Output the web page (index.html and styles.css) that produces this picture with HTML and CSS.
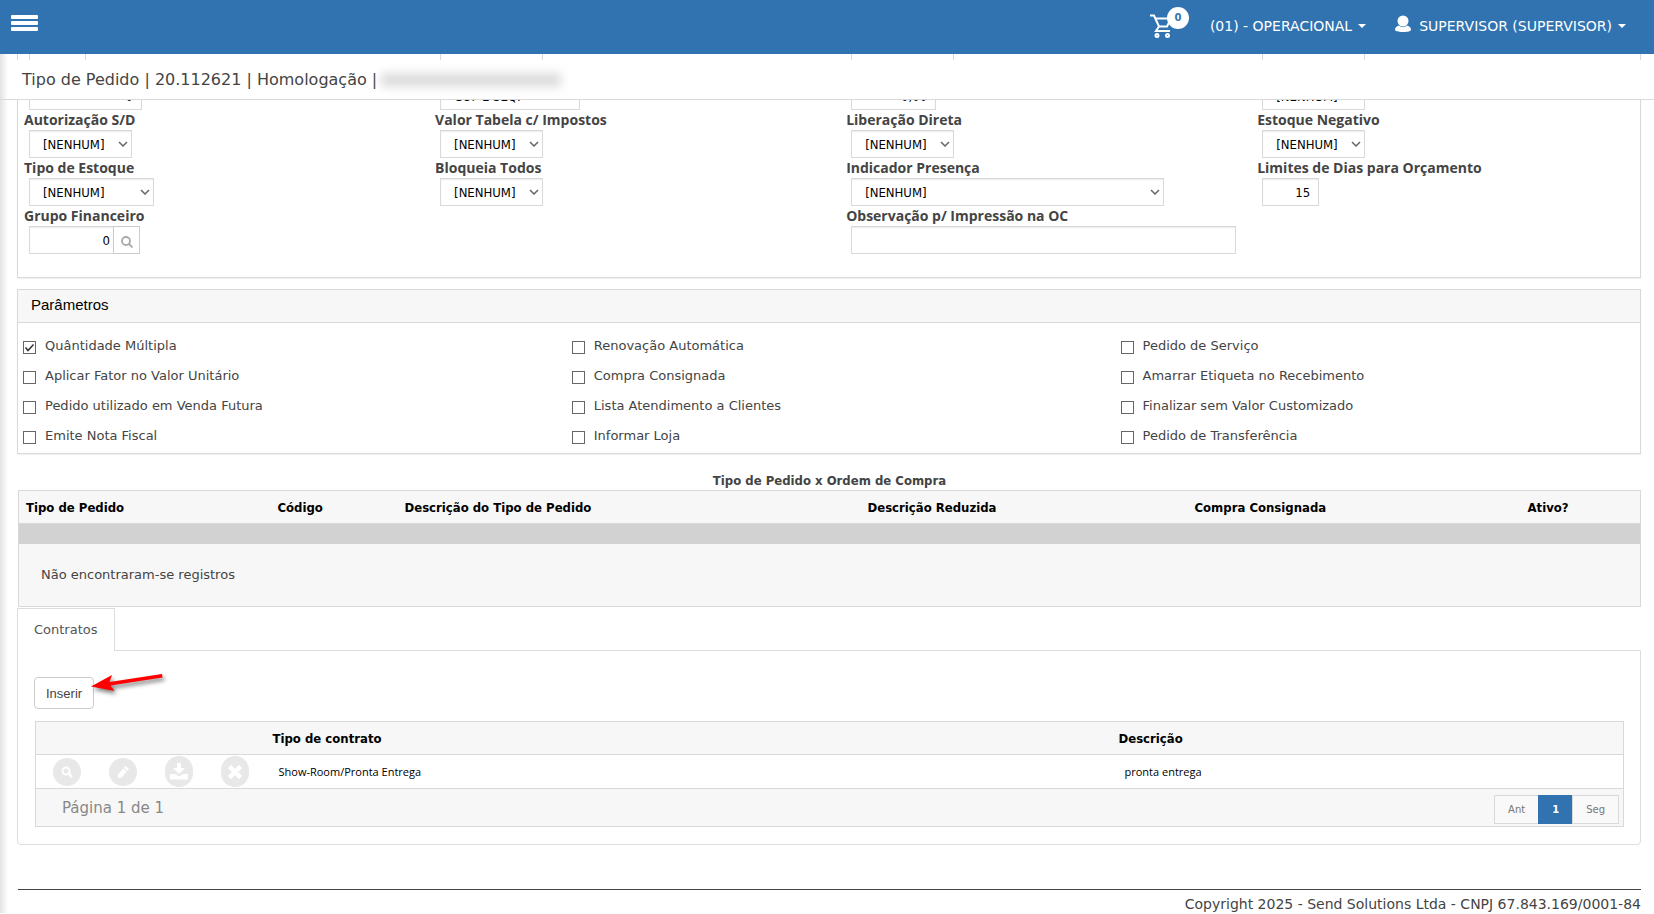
FILE: index.html
```
<!DOCTYPE html>
<html lang="pt-BR">
<head>
    <meta charset="UTF-8">
    <meta name="viewport" content="width=device-width, initial-scale=1.0">
    <title>Tipo de Pedido</title>
    <link rel="stylesheet" href="styles.css">
</head>
<body>

    <header class="topbar">
        <button class="menu-toggle" type="button" aria-label="Menu">
            <span></span><span></span><span></span>
        </button>
        <nav class="topbar-nav">
            <a class="cart" href="#" aria-label="Carrinho">
                <svg width="22" height="24" viewBox="0 0 22 24" fill="none" stroke="#fff" stroke-width="2">
                    <path d="M0 1.500h4l5 11h8l4-8M5 4.500h15M9 12.500l-3 4.500h14"/>
                    <circle cx="7" cy="21.500" r="1.500"/>
                    <circle cx="17.500" cy="21.500" r="1.500"/>
                </svg>
                <span class="cart-count">0</span>
            </a>
            <a class="nav-link" href="#">(01) - OPERACIONAL <span class="caret"></span></a>
            <a class="nav-link nav-user" href="#">
                <svg width="16" height="18" viewBox="0 0 16 18" fill="#fff">
                    <circle cx="8" cy="6" r="5.500"/>
                    <path d="M0 14.500c0-2 2-3.500 4-4 2 2.200 6 2.200 8 0 2 .5 4 2 4 4 0 1.600-2 2.500-8 2.500s-8-.9-8-2.500z"/>
                </svg>
                SUPERVISOR (SUPERVISOR) <span class="caret"></span>
            </a>
        </nav>
    </header>

    <div class="titlebar">
        <span>Tipo de Pedido | 20.112621 | Homologação |</span>
        <span class="masked"></span>
    </div>

    <main class="content">
        <section class="panel form-panel">
            <div class="form-grid">
                <div class="field"><input class="control w-code" type="text" aria-label="Código"></div>
                <div class="field"><input class="control w-flag" type="text" aria-label="Descrição"></div>
                <div class="field"><input class="control w-flag" type="text" aria-label="Opção"></div>
                <div class="field"><input class="control w-flag" type="text" aria-label="Ativo"></div>

                <div class="field unlabeled"><input class="control w-num number" type="text" value="0" aria-label="Ordem"></div>
                <div class="field unlabeled"><input class="control w-short" type="text" value="COF E SEQ." aria-label="Descrição Reduzida"></div>
                <div class="field unlabeled"><input class="control w-value number" type="text" value="0,00" aria-label="Valor"></div>
                <div class="field unlabeled"><select class="control w-flag" aria-label="Situação"><option>[NENHUM]</option></select></div>

                <div class="field"><label for="autorizacao">Autorização S/D</label><select class="control w-flag" id="autorizacao"><option>[NENHUM]</option></select></div>
                <div class="field"><label for="tabela">Valor Tabela c/ Impostos</label><select class="control w-flag" id="tabela"><option>[NENHUM]</option></select></div>
                <div class="field"><label for="liberacao">Liberação Direta</label><select class="control w-flag" id="liberacao"><option>[NENHUM]</option></select></div>
                <div class="field"><label for="negativo">Estoque Negativo</label><select class="control w-flag" id="negativo"><option>[NENHUM]</option></select></div>

                <div class="field"><label for="estoque">Tipo de Estoque</label><select class="control w-stock" id="estoque"><option>[NENHUM]</option></select></div>
                <div class="field"><label for="bloqueia">Bloqueia Todos</label><select class="control w-flag" id="bloqueia"><option>[NENHUM]</option></select></div>
                <div class="field"><label for="presenca">Indicador Presença</label><select class="control w-presence" id="presenca"><option>[NENHUM]</option></select></div>
                <div class="field"><label for="limite">Limites de Dias para Orçamento</label><input class="control w-days number" id="limite" type="text" value="15"></div>

                <div class="field">
                    <label for="grupo">Grupo Financeiro</label>
                    <div class="input-group">
                        <input class="control w-value number" id="grupo" type="text" value="0">
                        <button class="search-btn" type="button" aria-label="Pesquisar">
                            <svg width="12" height="12" viewBox="0 0 12 12" fill="none" stroke="#aaa" stroke-width="1.800"><circle cx="5" cy="5" r="4"/><path d="M8 8l3.500 3.500"/></svg>
                        </button>
                    </div>
                </div>
                <div class="field obs"><label for="obs">Observação p/ Impressão na OC</label><input class="control w-obs" id="obs" type="text"></div>
            </div>
        </section>

        <section class="panel">
            <h2 class="panel-title">Parâmetros</h2>
            <div class="check-grid">
                <label><input type="checkbox" checked> Quântidade Múltipla</label>
                <label><input type="checkbox"> Renovação Automática</label>
                <label><input type="checkbox"> Pedido de Serviço</label>
                <label><input type="checkbox"> Aplicar Fator no Valor Unitário</label>
                <label><input type="checkbox"> Compra Consignada</label>
                <label><input type="checkbox"> Amarrar Etiqueta no Recebimento</label>
                <label><input type="checkbox"> Pedido utilizado em Venda Futura</label>
                <label><input type="checkbox"> Lista Atendimento a Clientes</label>
                <label><input type="checkbox"> Finalizar sem Valor Customizado</label>
                <label><input type="checkbox"> Emite Nota Fiscal</label>
                <label><input type="checkbox"> Informar Loja</label>
                <label><input type="checkbox"> Pedido de Transferência</label>
            </div>
        </section>

        <div class="orders-wrap">
            <table class="grid orders">
                <caption>Tipo de Pedido x Ordem de Compra</caption>
                <colgroup>
                    <col class="col-type"><col class="col-code"><col class="col-desc"><col class="col-short"><col class="col-cons"><col>
                </colgroup>
                <thead>
                    <tr>
                        <th>Tipo de Pedido</th>
                        <th>Código</th>
                        <th>Descrição do Tipo de Pedido</th>
                        <th>Descrição Reduzida</th>
                        <th>Compra Consignada</th>
                        <th>Ativo?</th>
                    </tr>
                </thead>
                <tbody>
                    <tr class="separator"><td colspan="6"></td></tr>
                    <tr class="empty"><td colspan="6">Não encontraram-se registros</td></tr>
                </tbody>
            </table>
        </div>

        <div class="tabs">
            <a class="tab" href="#contratos">Contratos</a>
        </div>
        <section class="tab-panel" id="contratos">
            <div class="toolbar">
                <button class="btn" type="button">Inserir</button>
                <svg class="arrow" width="84" height="32" viewBox="0 0 84 32">
                    <path d="M1 16.500L22 5l-2.500 7L72 4l.5 3.500L20.500 15.500l4 5.500z" fill="red"/>
                </svg>
            </div>
            <table class="grid contracts">
                <colgroup>
                    <col class="col-actions"><col class="col-contract"><col>
                </colgroup>
                <thead>
                    <tr>
                        <th></th>
                        <th>Tipo de contrato</th>
                        <th>Descrição</th>
                    </tr>
                </thead>
                <tbody>
                    <tr>
                        <td>
                            <div class="actions">
                                <button class="action" type="button" aria-label="Visualizar">
                                    <svg width="12" height="12" viewBox="0 0 12 12" fill="none" stroke="#fff" stroke-width="2"><circle cx="5" cy="5" r="3.500"/><path d="M7.500 7.500L11 11" stroke-width="2.500"/></svg>
                                </button>
                                <button class="action" type="button" aria-label="Editar">
                                    <svg width="14" height="14" viewBox="0 0 14 14" fill="#fff"><path d="M9.500 1l3.500 3-1.500 1.800-3.500-3zM7.300 3.500l3.500 3-5.300 6-3.500.5-.5-3z"/></svg>
                                </button>
                                <button class="action large" type="button" aria-label="Baixar">
                                    <svg width="18" height="17" viewBox="0 0 18 17" fill="#fff"><path d="M7 0h4v5h4l-6 6-6-6h4zM0 11h5l4 2.500 4-2.500h5v5.500H0z"/></svg>
                                </button>
                                <button class="action large" type="button" aria-label="Excluir">
                                    <svg width="14" height="14" viewBox="0 0 14 14" stroke="#fff" stroke-width="4.500"><path d="M1.500 1.500l11 11M12.500 1.500l-11 11"/></svg>
                                </button>
                            </div>
                        </td>
                        <td>Show-Room/Pronta Entrega</td>
                        <td>pronta entrega</td>
                    </tr>
                </tbody>
            </table>
            <div class="pager">
                <span>Página 1 de 1</span>
                <div class="pages">
                    <button type="button">Ant</button>
                    <button class="active" type="button">1</button>
                    <button type="button">Seg</button>
                </div>
            </div>
        </section>

        <footer class="footer">Copyright 2025 - Send Solutions Ltda - CNPJ 67.843.169/0001-84</footer>
    </main>

</body>
</html>
```
FILE: styles.css
```
* {
    box-sizing: border-box;
}
body {
    margin: 0;
    background: #fff linear-gradient(to right, #e2e2e2, #fff 8px) no-repeat;
    color: #444;
    font-family: Verdana, "DejaVu Sans", sans-serif;
    font-size: 13px;
    overflow: hidden;
}
a {
    color: inherit;
    text-decoration: none;
}
button {
    font-family: inherit;
    cursor: pointer;
}

/* top bar */
.topbar {
    position: fixed;
    top: 0;
    left: 0;
    right: 0;
    z-index: 2;
    display: flex;
    align-items: center;
    justify-content: space-between;
    height: 54px;
    padding: 0 28px 2px 11px;
    background: #3073b0;
    color: #fff;
    font-size: 14px;
}
.menu-toggle {
    display: flex;
    flex-direction: column;
    gap: 2px;
    width: 27px;
    padding: 0;
    margin-bottom: 6px;
    border: none;
    background: none;
}
.menu-toggle span {
    height: 4px;
    border-radius: 1px;
    background: #fff;
}
.topbar-nav {
    display: flex;
    align-items: center;
}
.cart {
    position: relative;
    display: flex;
    width: 60px;
}
.cart-count {
    position: absolute;
    left: 17px;
    top: -7px;
    width: 22px;
    height: 22px;
    border-radius: 50%;
    background: #fff;
    color: #3073b0;
    font-size: 10px;
    font-weight: bold;
    line-height: 21px;
    text-align: center;
}
.nav-link {
    display: flex;
    align-items: center;
}
.nav-user {
    margin-left: 29px;
}
.nav-user svg {
    margin-right: 8px;
    margin-bottom: 4px;
}
.caret {
    margin-left: 6px;
    border: 4px solid transparent;
    border-top-color: #fff;
    border-bottom: none;
}

.titlebar {
    position: fixed;
    top: 60px;
    left: 0;
    right: 0;
    z-index: 1;
    display: flex;
    align-items: center;
    gap: 4px;
    height: 40px;
    padding-left: 22px;
    border-bottom: 1px solid #d9d9d9;
    background: #fff linear-gradient(to right, #e2e2e2, #fff 8px) no-repeat;
    font-size: 16px;
}
.masked {
    width: 180px;
    height: 14px;
    background: #ddd;
    filter: blur(5px);
}

.content {
    padding: 0 13px 0 17px;
}

/* form */
.panel {
    margin-bottom: 11px;
    border: 1px solid #d9d9d9;
    background: #fff;
    box-shadow: 0 1px 1px rgba(0, 0, 0, 0.05);
}
.form-panel {
    padding: 33px 6px 23px;
}
.form-grid {
    display: grid;
    grid-template-columns: repeat(3, 12fr) 11fr;
}
.field {
    display: flex;
    flex-direction: column;
    align-items: flex-start;
}
.field.unlabeled {
    padding-top: 20px;
}
.field.obs {
    grid-column: 3;
}
.field label {
    font-family: "Trebuchet MS", "Open Sans", sans-serif;
    font-size: 14px;
    font-weight: bold;
    line-height: 20px;
}
.control {
    height: 28px;
    margin-left: 5px;
    padding: 0 13px;
    border: 1px solid #d9d9d9;
    border-radius: 0;
    background: #fff;
    box-shadow: inset 0 1px 1px rgba(0, 0, 0, 0.08);
    color: #000;
    font-family: Tahoma, "DejaVu Sans Condensed", sans-serif;
    font-size: 13px;
}
select.control {
    appearance: none;
    background: #fff url("data:image/svg+xml,%3Csvg xmlns='http://www.w3.org/2000/svg' width='10' height='6' fill='none' stroke='%23666' stroke-width='1.500'%3E%3Cpath d='M1 1l4 4 4-4'/%3E%3C/svg%3E") no-repeat right 3px center;
}
.number {
    padding: 0 8px;
    text-align: right;
}
.w-code { width: 57px; }
.w-flag { width: 103px; }
.w-num { width: 113px; }
.w-short { width: 140px; }
.w-value { width: 85px; }
.w-stock { width: 125px; }
.w-days { width: 57px; }
.w-presence { width: 313px; }
.w-obs { width: 385px; }
.input-group {
    display: flex;
}
.input-group .control {
    padding: 0 3px;
}
.search-btn {
    display: flex;
    align-items: center;
    justify-content: center;
    width: 27px;
    height: 28px;
    margin-left: -1px;
    padding: 4px 0 0;
    border: 1px solid #ccc;
    background: #fff;
}

/* checkboxes */
.panel-title {
    margin: 0;
    padding: 0 13px 2px;
    border-bottom: 1px solid #d9d9d9;
    background: #f7f7f7;
    color: #000;
    font-family: Arial, "Liberation Sans", sans-serif;
    font-size: 15px;
    font-weight: normal;
    line-height: 30px;
}
.check-grid {
    display: grid;
    grid-template-columns: repeat(2, 16fr) 15fr;
    padding: 7px 5px 3px;
}
.check-grid label {
    display: flex;
    align-items: center;
    gap: 9px;
    height: 30px;
}
.check-grid input {
    appearance: none;
    width: 13px;
    height: 13px;
    margin: 4px 0 0;
    border: 1px solid #666;
    background: #fff;
}
.check-grid input:checked {
    background: #fff url("data:image/svg+xml,%3Csvg xmlns='http://www.w3.org/2000/svg' width='11' height='11' fill='none' stroke='%23333' stroke-width='1.500'%3E%3Cpath d='M1.500 5.500l2.500 3 5.500-6'/%3E%3C/svg%3E") no-repeat center;
}

/* tables */
.grid {
    border-collapse: collapse;
    table-layout: fixed;
}
.grid th {
    height: 33px;
    padding: 0 7px;
    border-top: 1px solid #d9d9d9;
    border-bottom: 1px solid #d9d9d9;
    background: #f7f7f7;
    color: #000;
    font-family: Tahoma, "DejaVu Sans Condensed", sans-serif;
    text-align: left;
}
.orders-wrap {
    padding-left: 1px;
}
.orders {
    width: 100%;
    border: 1px solid #d9d9d9;
}
.orders caption {
    padding: 8px 0 2px;
    font-weight: bold;
    font-family: Tahoma, "DejaVu Sans Condensed", sans-serif;
    line-height: 15px;
}
.col-type { width: 252px; }
.col-code { width: 127px; }
.col-desc { width: 463px; }
.col-short { width: 327px; }
.col-cons { width: 333px; }
.separator td {
    height: 20px;
    padding: 0;
    background: #d2d2d2;
}
.empty td {
    height: 63px;
    padding: 0 22px;
    background: #f7f7f7;
}

/* tabs */
.tabs {
    display: flex;
    margin-top: 1px;
}
.tab {
    margin-bottom: -1px;
    padding: 0 16px;
    border: 1px solid #ddd;
    border-bottom: none;
    background: #fff;
    color: #555;
    line-height: 42px;
}
.tab-panel {
    padding: 26px 16px 17px 17px;
    border: 1px solid #ddd;
    border-radius: 0 0 4px 4px;
}
.toolbar {
    display: flex;
    margin-bottom: 12px;
}
.btn {
    height: 32px;
    padding: 0 11px;
    margin-left: -1px;
    border: 1px solid #ccc;
    border-radius: 4px;
    background: #fff;
    color: #444;
    font-family: Arial, "Liberation Sans", sans-serif;
    font-size: 13px;
}
.arrow {
    margin: -7px 0 0 -4px;
    filter: drop-shadow(2px 3px 2px rgba(0, 0, 0, 0.5));
}
.contracts {
    width: 100%;
    border: 1px solid #d9d9d9;
}
.contracts td {
    height: 34px;
    padding: 0 13px;
    color: #000;
    font-family: "Trebuchet MS", "Open Sans", sans-serif;
    font-size: 11px;
}
.col-actions { width: 230px; }
.col-contract { width: 846px; }
.actions {
    display: flex;
    align-items: center;
    justify-content: space-between;
    width: 196px;
    margin-left: 4px;
}
.action {
    display: flex;
    align-items: center;
    justify-content: center;
    width: 28px;
    height: 28px;
    padding: 0;
    border: none;
    border-radius: 14px;
    background: #e8e8e8;
}
.action.large {
    height: 31px;
}
.pager {
    display: flex;
    align-items: center;
    justify-content: space-between;
    height: 38px;
    padding: 0 4px 0 26px;
    border: 1px solid #d9d9d9;
    border-top: none;
    background: #f7f7f7;
    color: #888;
    font-size: 15px;
}
.pages {
    display: flex;
    margin-top: 4px;
}
.pages button {
    height: 29px;
    padding: 0 13px;
    border: 1px solid #d9d9d9;
    background: #f9f9f9;
    color: #777;
    font-size: 10px;
}
.pages button + button {
    margin-left: -1px;
}
.pages .active {
    border-color: #3073b0;
    background: #3073b0;
    color: #fff;
    font-weight: bold;
}

.footer {
    margin: 44px 0 0 1px;
    padding-top: 5px;
    border-top: 1px solid #444;
    font-size: 14px;
    line-height: 18px;
    text-align: right;
}
```
